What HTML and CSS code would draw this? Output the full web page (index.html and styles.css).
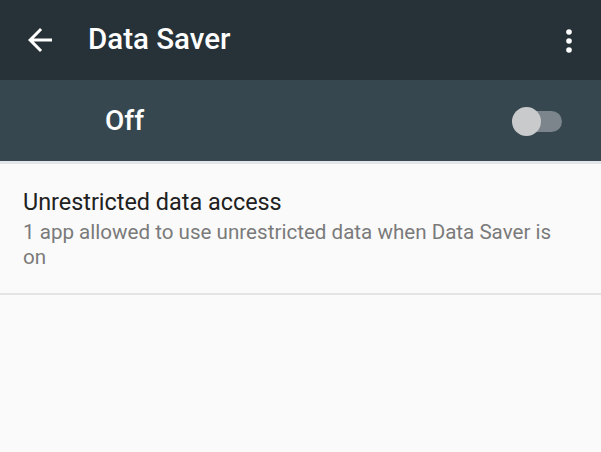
FILE: index.html
```html
<!DOCTYPE html>
<html>
<head>
<meta charset="utf-8">
<link rel="stylesheet" href="styles.css">
</head>
<body>
<div class="screen">
  <header class="appbar">
    <svg class="back" viewBox="0 0 24 24" width="36" height="36"><path fill="#fff" d="M20 11H7.83l5.59-5.59L12 4l-8 8 8 8 1.41-1.41L7.83 13H20v-2z"/></svg>
    <h1 class="title">Data Saver</h1>
    <svg class="more" viewBox="0 0 10 30" width="10" height="30"><circle cx="5" cy="5" r="2.8" fill="#fff"/><circle cx="5" cy="14" r="2.8" fill="#fff"/><circle cx="5" cy="23" r="2.8" fill="#fff"/></svg>
  </header>
  <div class="switchbar">
    <span class="switch-label">Off</span>
    <span class="toggle"><span class="track"></span><span class="thumb"></span></span>
  </div>
  <div class="item">
    <div class="item-title">Unrestricted data access</div>
    <div class="item-sub">1 app allowed to use unrestricted data when Data Saver is on</div>
  </div>
</div>
</body>
</html>
```
FILE: styles.css
```css
html, body {
  margin: 0;
  padding: 0;
  background: #fafafa;
  font-family: Roboto, "Liberation Sans", sans-serif;
}
.screen {
  width: 601px;
  height: 452px;
  overflow: hidden;
  background: #fafafa;
}
.appbar {
  height: 80px;
  background: #263238;
  display: flex;
  align-items: center;
  padding: 0 0 0 22px;
}
.back {
  flex: none;
  display: block;
}
.title {
  margin: 0 0 3px 30px;
  font-size: 29.5px;
  font-weight: 500;
  color: #fff;
  flex: 1;
  letter-spacing: 0;
}
.more {
  flex: none;
  margin-right: 27px;
  margin-top: 3px;
  display: block;
}
.switchbar {
  height: 81px;
  background: #37474f;
  display: flex;
  align-items: center;
  padding-left: 105px;
  border-bottom: 3px solid #e3e6e9;
}
.switch-label {
  font-size: 28px;
  font-weight: 500;
  color: #fff;
  flex: 1;
}
.toggle {
  position: relative;
  width: 50px;
  height: 30px;
  margin-right: 39px;
}
.track {
  position: absolute;
  left: 2px;
  right: 0;
  top: 5px;
  height: 21px;
  border-radius: 11px;
  background: #7b858b;
}
.thumb {
  position: absolute;
  left: 0;
  top: 1px;
  width: 29px;
  height: 29px;
  border-radius: 50%;
  background: #c9cacb;
}
.item {
  padding: 24px 45px 23px 23px;
  border-bottom: 2px solid #e4e4e4;
}
.item-title {
  font-size: 23.4px;
  color: #212121;
  line-height: 28px;
}
.item-sub {
  font-size: 20.6px;
  color: #7a7a7a;
  line-height: 25px;
  margin-top: 4px;
}
```
